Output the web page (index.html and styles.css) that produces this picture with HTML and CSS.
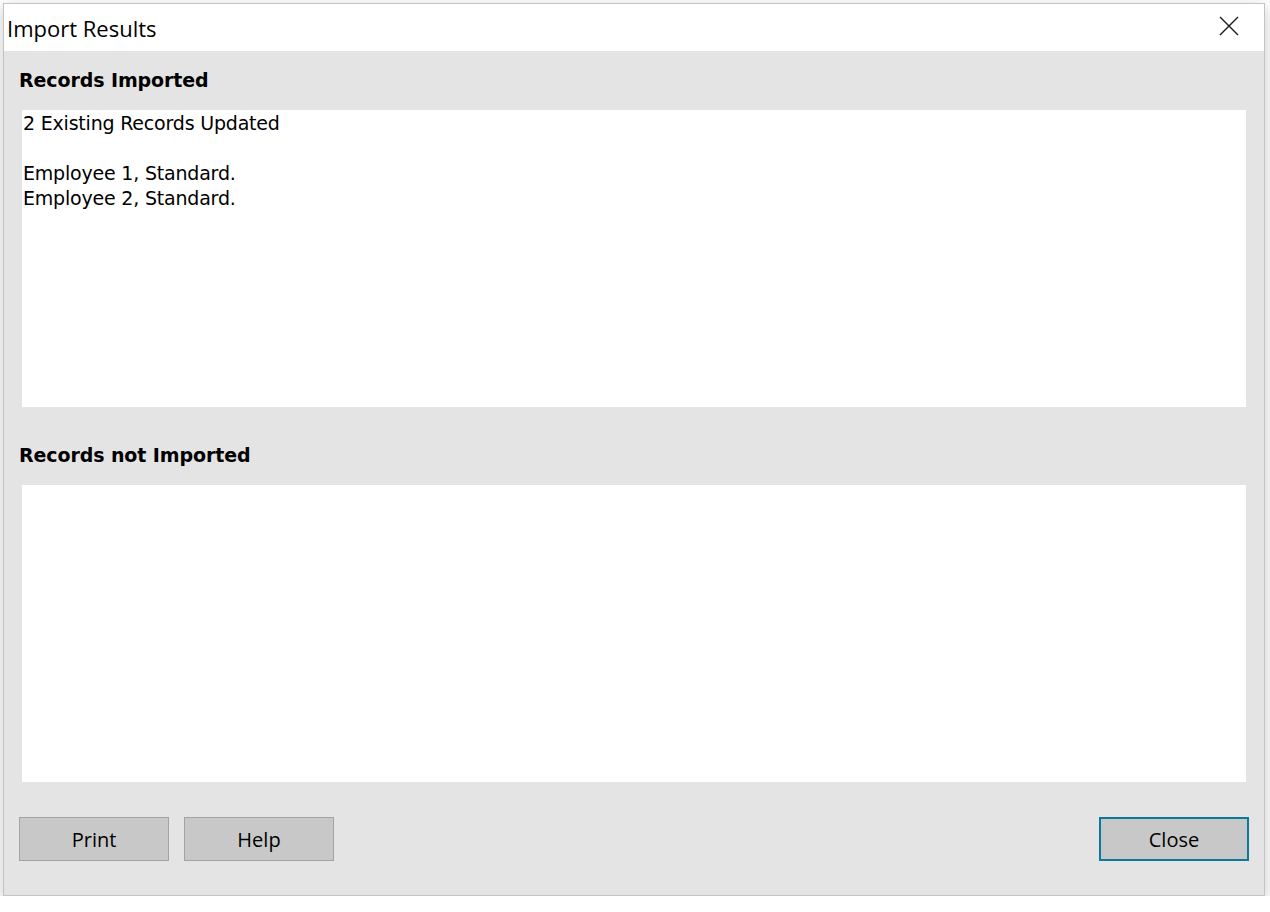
FILE: index.html
```html
<!DOCTYPE html>
<html lang="en">
<head>
  <meta charset="UTF-8">
  <meta name="viewport" content="width=device-width, initial-scale=1.0">
  <title>Import Results</title>
  <link rel="stylesheet" href="styles.css">
</head>
<body>
  <div class="dialog">
    <!-- Title bar -->
    <div class="titlebar">
      <span class="title">Import Results</span>
      <button class="close-x" type="button" aria-label="Close">
        <svg width="20" height="20" viewBox="0 0 20 20">
          <path d="M1 1 L19 19 M19 1 L1 19" stroke="#1a1a1a" stroke-width="1.4" fill="none"/>
        </svg>
      </button>
    </div>

    <div class="content">
      <!-- Imported records -->
      <div class="section-label first">Records Imported</div>
      <div class="results-box">2 Existing Records Updated<br><br>Employee 1, Standard.<br>Employee 2, Standard.</div>

      <!-- Rejected records -->
      <div class="section-label">Records not Imported</div>
      <div class="results-box"></div>

      <!-- Buttons -->
      <div class="footer">
        <button class="btn" type="button">Print</button>
        <button class="btn" type="button">Help</button>
        <button class="btn btn-default" type="button">Close</button>
      </div>
    </div>
  </div>
</body>
</html>
```

FILE: styles.css
```css
body {
  margin: 0;
  background-color: #ffffff;
}
.dialog {
  margin: 3px 0 0 3px;
  width: 1260px;
  height: 891px;
  border: 1px solid #c4c4c4;
  background-color: #e4e4e4;
  box-shadow: 0 4px 14px rgba(0, 0, 0, 0.22);
  display: flex;
  flex-direction: column;
}
.titlebar {
  height: 47px;
  background-color: #ffffff;
  display: flex;
  align-items: center;
  justify-content: space-between;
}
.title {
  font-family: "Open Sans", "Noto Sans", sans-serif;
  font-size: 22px;
  color: #000000;
  padding-left: 3px;
  margin-top: 1px;
}
.close-x {
  width: 46px;
  height: 40px;
  margin-right: 12px;
  margin-top: -4px;
  border: none;
  background: none;
  padding: 0;
  display: flex;
  align-items: center;
  justify-content: center;
}
.content {
  flex: 1;
  display: flex;
  flex-direction: column;
  padding: 0 18px 0 18px;
  font-family: "DejaVu Sans", Verdana, sans-serif;
}
.section-label {
  height: 25px;
  line-height: 25px;
  margin: 36px 0 17px -3px;
  font-size: 19px;
  font-weight: bold;
  color: #000000;
  letter-spacing: -0.1px;
}
.section-label.first {
  margin-top: 17px;
}
.results-box {
  height: 297px;
  box-sizing: border-box;
  background-color: #ffffff;
  padding: 1px 1px 0;
  font-size: 19px;
  line-height: 25px;
  color: #000000;
  letter-spacing: -0.2px;
}
.footer {
  display: flex;
  gap: 15px;
  margin: 35px -3px 0 -3px;
}
.btn {
  width: 150px;
  height: 44px;
  background-color: #c8c8c8;
  border: 1px solid #a3a3a3;
  font-family: "Open Sans", "Noto Sans", sans-serif;
  font-size: 20px;
  color: #000000;
  padding: 0;
}
.btn-default {
  margin-left: auto;
  border: 2px solid #0a7a9a;
}
```
